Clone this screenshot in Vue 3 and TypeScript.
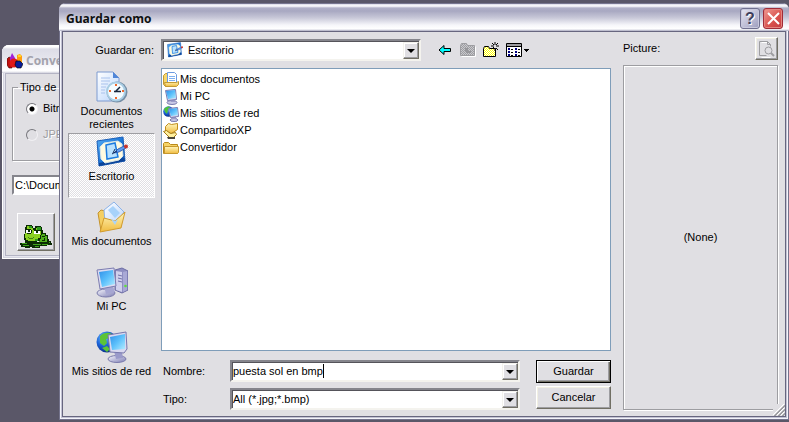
<script setup lang="ts">
import { ref } from 'vue'

interface Entry { icon: string; label: string }

const places: Entry[] = [
  { icon: 'recent', label: 'Documentos recientes' },
  { icon: 'desk', label: 'Escritorio' },
  { icon: 'mydocs', label: 'Mis documentos' },
  { icon: 'pc', label: 'Mi PC' },
  { icon: 'net', label: 'Mis sitios de red' },
]
const files: Entry[] = [
  { icon: 'docs16', label: 'Mis documentos' },
  { icon: 'pc16', label: 'Mi PC' },
  { icon: 'net16', label: 'Mis sitios de red' },
  { icon: 'shared16', label: 'CompartidoXP' },
  { icon: 'folder16', label: 'Convertidor' },
]
const tools = [
  { icon: 'back', label: 'Atrás', wide: false },
  { icon: 'up', label: 'Subir un nivel', wide: false },
  { icon: 'newfolder', label: 'Crear nueva carpeta', wide: false },
  { icon: 'views', label: 'Ver', wide: true },
]
const place = ref('Escritorio')
const folder = ref('Escritorio')
const fileName = ref('puesta sol en bmp')
const fileType = ref('All (*.jpg;*.bmp)')
const format = ref('bmp')
const path = ref('C:\\Documents')
</script>

<template>
  <svg class="sprite" aria-hidden="true">
    <defs>
      <linearGradient id="gScreen" x1="0" y1="0" x2="1" y2="1">
        <stop offset="0" stop-color="#2f8fe8" /><stop offset=".5" stop-color="#5cc0fb" /><stop offset="1" stop-color="#b4ecff" />
      </linearGradient>
      <linearGradient id="gFolder" x1="0" y1="0" x2="0" y2="1">
        <stop offset="0" stop-color="#fff6bd" /><stop offset="1" stop-color="#f0bb3f" />
      </linearGradient>
      <linearGradient id="gMetal" x1="0" y1="0" x2="1" y2="1">
        <stop offset="0" stop-color="#f6f6fd" /><stop offset="1" stop-color="#7d7db4" />
      </linearGradient>
      <linearGradient id="gDesk" x1="0" y1="0" x2="1" y2="1">
        <stop offset="0" stop-color="#58aff5" /><stop offset=".5" stop-color="#1c76d8" /><stop offset="1" stop-color="#0a4ba6" />
      </linearGradient>
      <linearGradient id="gPaper" x1="0" y1="0" x2="1" y2="1">
        <stop offset="0" stop-color="#ffffff" /><stop offset="1" stop-color="#b9d4fb" />
      </linearGradient>
      <radialGradient id="gGlobe" cx=".35" cy=".3" r=".75">
        <stop offset="0" stop-color="#6fc4ff" /><stop offset=".5" stop-color="#1b62d8" /><stop offset="1" stop-color="#0a2b80" />
      </radialGradient>
      <pattern id="pDither" width="2" height="2" patternUnits="userSpaceOnUse">
        <rect width="2" height="2" fill="#ffff00" /><path d="M0 0h1v1H0zM1 1h1v1H1z" fill="#ffffff" />
      </pattern>
      <pattern id="pGrey" width="2" height="2" patternUnits="userSpaceOnUse">
        <rect width="2" height="2" fill="#c9c9cd" /><path d="M0 0h1v1H0zM1 1h1v1H1z" fill="#9d9da1" />
      </pattern>
    </defs>

    <symbol id="recent" viewBox="0 0 32 32">
      <path d="M1 1h16l6 6v23H1z" fill="url(#gPaper)" stroke="#7c9ad0" />
      <path d="M17 1l6 6h-6z" fill="#4f86d8" />
      <path d="M5 7h9M5 10h9M5 13h7M5 16h5M5 19h4M5 22h4" stroke="#a9c2ec" />
      <circle cx="21" cy="21" r="10.5" fill="#748da4" />
      <circle cx="20" cy="20.500" r="9" fill="#f4fbff" stroke="#a9cde4" stroke-width="2" />
      <path d="M20 13v2M20 26v2M13 20h2M26 20h2" stroke="#f0682c" stroke-width="2" />
      <path d="M19 21l5-5M18 20.500h7" fill="none" stroke="#17263c" stroke-width="1.500" />
    </symbol>
    <symbol id="desk" viewBox="0 0 32 32">
      <path d="M1 5L27 1l2 24-26 5z" fill="url(#gDesk)" stroke="#1c5fb8" />
      <path d="M3 30l26-5-.5-3L3 27z" fill="#0b4498" />
      <path d="M8 7l14-2 4 3 1 12-4 4-14 3-4-4-1-12z" fill="#fffbe0" stroke="#d8e6e8" />
      <path d="M10 9l9-2 3 14-11 2z" fill="#b9e2ff" stroke="#1b7be0" stroke-width="1.500" />
      <path d="M18 17l4-4 6-3 2 2-7 4z" fill="#5f9cf2" stroke="#1d4da8" stroke-width=".8" />
      <path d="M16 18l5-3M17 17l2-4" stroke="#0f2c60" />
      <circle cx="30" cy="10.500" r="2" fill="#c9342a" />
    </symbol>
    <symbol id="mydocs" viewBox="0 0 32 32">
      <path d="M2 12l3-3 4 1 2 3 14-2v14L5 30z" fill="#f5cf62" stroke="#c5922a" />
      <path d="M8 9L18 1l10 10-9 13-10-3z" fill="url(#gPaper)" stroke="#8bb2e8" />
      <path d="M12 9l5-4 7 7-5 5z" fill="#a7d2fa" />
      <path d="M4 31L8 17l11 3 10-9-4 16z" fill="url(#gFolder)" stroke="#d19b2d" />
      <path d="M15 18l4 2 3-2-3 6z" fill="#a9d4fa" />
    </symbol>
    <symbol id="pc" viewBox="0 0 32 32">
      <path d="M19 4l7-2 6 3v19l-6 3-7-3z" fill="#8e8ec2" stroke="#6d6da4" />
      <path d="M27 6l4-1v19l-4 2z" fill="#a9a9d6" /><path d="M20 5l6 1v20l-6-2z" fill="#d0d0ec" />
      <path d="M22 9l4 1M22 12l4 1M22 15l4 1" stroke="#6f6fa8" />
      <circle cx="29.500" cy="20" r="1.300" fill="#5ee03a" />
      <ellipse cx="10" cy="27" rx="9" ry="4" fill="url(#gMetal)" stroke="#7a7aab" />
      <path d="M8 20h9l2 6-9 2z" fill="#a6a6d2" />
      <path d="M1 4l17-2 2 18-16 3z" fill="#dcdcf2" stroke="#7c7cb0" />
      <path d="M3 6l14-2 2 14-13 3z" fill="url(#gScreen)" />
    </symbol>
    <symbol id="net" viewBox="0 0 32 32">
      <circle cx="11" cy="11" r="10.5" fill="url(#gGlobe)" />
      <path d="M4 5c4-4 9-4 12-2l-2 4-4 1 1 4-3 3-4-3zM6 17l5-2 3 3-3 3z" fill="#5cc437" />
      <ellipse cx="21" cy="28" rx="9" ry="3.500" fill="url(#gMetal)" stroke="#7a7aab" />
      <path d="M18 20l8 1 1 6-7 1z" fill="#9a9aca" />
      <path d="M12 4l18-3 1 17-3 4-14-1z" fill="#d8d8f0" stroke="#7777ab" />
      <path d="M14 6l15-3v15l-13 1z" fill="url(#gScreen)" />
    </symbol>
    <symbol id="docs16" viewBox="0 0 16 16">
      <path d="M.5 3.500l2-2h3l1 1v12h-4l-2-2z" fill="#f7d76b" stroke="#c39a32" />
      <path d="M4.500.5h7l2 2v9h-9z" fill="#fff" stroke="#6c9be0" />
      <path d="M6 4.500h6M6 6.500h6M6 8.500h6" stroke="#7fb0f0" />
      <path d="M2.500 14.500l-1-4h12l2-1v3l-2 2z" fill="url(#gFolder)" stroke="#c39a32" />
    </symbol>
    <symbol id="pc16" viewBox="0 0 16 16">
      <ellipse cx="9" cy="13.500" rx="5" ry="2" fill="#c9c9e6" stroke="#7b7bad" />
      <path d="M8 10h4v3H8z" fill="#9d9dca" />
      <path d="M2.500 1.500l10-1 1 10-9 1z" fill="#dadaf0" stroke="#7a7ab0" />
      <path d="M3 2l9-1 1 8-8 1z" fill="url(#gScreen)" />
    </symbol>
    <symbol id="net16" viewBox="0 0 16 16">
      <circle cx="5.500" cy="5.500" r="5.300" fill="url(#gGlobe)" />
      <path d="M1 3c2-2 4-3 6-2L5 4 4 8 2 6z" fill="#4fc23a" />
      <ellipse cx="11" cy="14" rx="4" ry="1.500" fill="#c9c9e6" stroke="#7b7bad" />
      <path d="M9 10h4v3H9z" fill="#9d9dca" />
      <path d="M5.500 2.500l9-1 1 9-8 1z" fill="#dadaf0" stroke="#7a7ab0" />
      <path d="M6 3l8-1 1 7-7 1z" fill="url(#gScreen)" />
    </symbol>
    <symbol id="shared16" viewBox="0 0 16 16">
      <path d="M2.500 3.500l3-3 3 1 6-1v6l-6 4-6-2z" fill="url(#gFolder)" stroke="#c08d1c" />
      <path d="M.5 8.500l3-1 4 3 5-1 1 2-3 3h-4z" fill="#fff0a0" stroke="#a37a14" />
      <path d="M4 14h8v2H5z" fill="#49453a" />
    </symbol>
    <symbol id="folder16" viewBox="0 0 16 16">
      <path d="M.5 13.500v-10l1-1h4l2 2h7v9z" fill="#f6d366" stroke="#b98a1c" />
      <path d="M1.500 13.500v-7h14v6l-1 1z" fill="url(#gFolder)" stroke="#c6982f" />
    </symbol>
    <symbol id="back" viewBox="0 0 16 16">
      <path d="M2 8L7 3.500V6.500H13.500V9.500H7V12.500z" fill="#00ffff" stroke="#000" />
    </symbol>
    <symbol id="up" viewBox="0 0 16 16">
      <path d="M1.500 14.500h14v-10" fill="none" stroke="#fff" />
      <path d="M.5 13.500v-10l1-2h5l1 2h7v10z" fill="url(#pGrey)" stroke="#9d9da1" />
      <path d="M5 6h3v3H5zM6 9h5v2H6z" fill="#96969a" />
    </symbol>
    <symbol id="newfolder" viewBox="0 0 16 16">
      <path d="M.5 14.500v-8l1-2h4l1 2h6v8z" fill="url(#pDither)" stroke="#000" />
      <path d="M12 0v3M12 6v3M8 4h3M13 4h3M9 1l2 2M15 1l-2 2M13 6l2 2M9 7l2-2" stroke="#000" fill="none" />
    </symbol>
    <symbol id="views" viewBox="0 0 24 16">
      <path d="M.5 1.500h15v13H.5z" fill="#fff" stroke="#000" /><path d="M1 2h14v2H1z" fill="#9d9da1" /><path d="M0 4h16v1H0z" />
      <path d="M2 6h2v2H2zM2 9h2v2H2zM2 12h2v2H2zM9 6h2v2H9zM9 9h2v2H9zM9 12h2v2H9z" fill="#000080" />
      <path d="M5 7.500h2M5 10.500h2M5 13.500h2M12 7.500h2M12 10.500h2M12 13.500h2" stroke="#000" />
      <path d="M18 7h5v1h-1v1h-1v1h-1V9h-1V8h-1z" />
    </symbol>
    <symbol id="shapes" viewBox="0 0 16 16">
      <path d="M0 6l2-2 2 1 1 3v7H2L0 12z" fill="#c01010" stroke="#400000" stroke-width=".6" />
      <path d="M5 0l3 5v4H3V5z" fill="#a020d8" />
      <path d="M10 2l3-1 2 2v10h-5z" fill="#ff9c10" /><path d="M11 2h3v2h-3z" fill="#ffd820" />
      <circle cx="7" cy="10" r="4.500" fill="#e01818" />
      <path d="M9 8h4l3 3-2 4h-4l-2-3z" fill="#081c98" stroke="#000" stroke-width=".6" />
    </symbol>
    <symbol id="frog" viewBox="0 0 32 24" shape-rendering="crispEdges">
      <path d="M0 19h5v-1h22v-1h4v2h1v2h-5v1h-7v2h-8v-1h-2v1H5v-1H1v-2H0z" fill="#0a2a04" />
      <path d="M2 19h5v1H2zM3 21h6v1H3zM13 20h8v1h-8zM15 22h4v1h-4zM24 18h6v1h-6zM22 20h6v1h-6z" fill="#3fa51c" />
      <path d="M20 6h3v3h3v2h2v4h1v4h-9z" fill="#0a2a04" />
      <path d="M19 8h3v2h3v2h2v6h-8z" fill="#4fae1b" /><path d="M22 12h3v1h-3zM24 14h1v3h-3v-1h2z" fill="#0a2a04" />
      <path d="M5 3h1V1h6v1h1v2h2V2h6v1h1v8h-1v4h-1v2h-3v2H7v-1H5v-2H4v-6h1z" fill="#0a2a04" />
      <path d="M7 2h4v2h2v2h3V4h1V3h3v4h1v4h-1v3h-2v2h-3v1H8v-1H6v-2H5v-5h2z" fill="#8bd022" />
      <path d="M9 2h3v2H9zM17 3h4v3h-4zM15 15h3v2h-3z" fill="#2c9a1c" />
      <path d="M6 5h5v4H6zM14 6h6v4h-6z" fill="#fff" /><path d="M6 5h5v1H6zM14 6h6v1h-6zM8 6h2v2H8zM16 7h2v2h-2zM11 6h1v3h-1zM7 9h4v1H7z" fill="#0a2a04" />
      <path d="M8 13h1v1H8zM9 14h4v1H9zM13 13h1v1h-1z" fill="#3f8214" />
    </symbol>
    <symbol id="preview" viewBox="0 0 18 18">
      <path d="M12.500 17.500h-9M3.500 2.500h7" stroke="#fff" />
      <path d="M1.500 15.500v-14h8l3 3v2M9.500 1.500v3h3M1.500 15.500h7" fill="none" stroke="#9d9da1" />
      <circle cx="10.500" cy="10.500" r="3.500" fill="none" stroke="#9d9da1" />
      <path d="M13 13l3 3" stroke="#9d9da1" stroke-width="2" />
    </symbol>
  </svg>

  <div class="desktop">
    <section class="window behind">
      <header class="bar"><svg class="i16"><use href="#shapes" /></svg><h2>Convertidor</h2></header>
      <form class="client" @submit.prevent>
        <fieldset>
          <legend>Tipo de imagen</legend>
          <label><input v-model="format" type="radio" value="bmp" />Bitmap</label>
          <label class="off"><input v-model="format" type="radio" value="jpg" disabled />JPEG</label>
        </fieldset>
        <input v-model="path" class="field" aria-label="Ruta" />
        <button class="frog" aria-label="Convertir"><svg><use href="#frog" /></svg></button>
      </form>
    </section>

    <section class="window dialog">
      <header class="bar">
        <h1>Guardar como</h1>
        <button class="cap" aria-label="Ayuda">?</button>
        <button class="cap close" aria-label="Cerrar"><svg viewBox="0 0 13 13"><path d="M1 1l11 11M12 1L1 12" /></svg></button>
      </header>
      <form class="client body" @submit.prevent>
        <div class="main">
          <div class="top">
            <label for="folder">Guardar en:</label>
            <div class="combo look">
              <svg class="i16"><use href="#desk" /></svg>
              <select id="folder" v-model="folder"><option>Escritorio</option></select>
              <span class="drop"></span>
            </div>
            <div class="tools">
              <button v-for="t in tools" :key="t.icon" type="button" :class="{ wide: t.wide }" :aria-label="t.label"><svg><use :href="'#' + t.icon" /></svg></button>
            </div>
          </div>
          <div class="middle">
            <nav class="places">
              <button v-for="p in places" :key="p.label" type="button" :class="{ on: p.label === place }" @click="place = p.label">
                <svg><use :href="'#' + p.icon" /></svg>{{ p.label }}
              </button>
            </nav>
            <div class="right">
              <ul class="files">
                <li v-for="f in files" :key="f.label"><svg class="i16"><use :href="'#' + f.icon" /></svg>{{ f.label }}</li>
              </ul>
              <div class="foot">
                <div class="rows">
                  <div class="row">
                    <label for="name">Nombre:</label>
                    <div class="combo"><input id="name" v-model="fileName" /><i class="caret"></i><span class="drop"></span></div>
                  </div>
                  <div class="row">
                    <label for="type">Tipo:</label>
                    <div class="combo"><select id="type" v-model="fileType"><option>All (*.jpg;*.bmp)</option></select><span class="drop"></span></div>
                  </div>
                </div>
                <div class="actions">
                  <button class="push default">Guardar</button>
                  <button class="push" type="button">Cancelar</button>
                </div>
              </div>
            </div>
          </div>
        </div>
        <aside>
          <div class="phead"><span>Picture:</span><button class="push zoom" type="button" aria-label="Vista previa" disabled><svg><use href="#preview" /></svg></button></div>
          <div class="picture">(None)</div>
        </aside>
      </form>
      <svg class="grip" viewBox="0 0 12 12"><path class="hi" d="M0 11L11 0M4 11L11 4M8 11L11 8" /><path d="M1 12L12 1M2 12L12 2M5 12L12 5M6 12L12 6M9 12L12 9M10 12L12 10" /></svg>
    </section>
  </div>
</template>

<style>
body { margin: 0; }
</style>

<style scoped>
* { box-sizing: border-box; }
.sprite { position: absolute; width: 0; height: 0; }
.desktop {
  position: relative; height: 100vh; overflow: hidden; background: #5a5768;
  font: 11px/13px "Liberation Sans", Arial, sans-serif; color: #000; white-space: nowrap;
}
button, input, select { font: inherit; color: inherit; margin: 0; padding: 0; border: 0; border-radius: 0; outline: 0; background: none; }
svg { display: block; flex: none; }
.i16 { width: 16px; height: 16px; }
h1, h2 { margin: 0; font: bold 12px/18px "Open Sans", "Noto Sans", sans-serif; color: #0e1010; }

.window {
  position: absolute; display: flex; flex-direction: column; padding: 0 3px 3px;
  border-radius: 7px 7px 0 0; background: #c2c2d3;
  box-shadow: inset 0 0 0 1px #74738c, inset 0 0 0 2px #f4f4fa;
}
.bar {
  display: flex; align-items: center; gap: 3px; height: 28px; flex: none; margin: 0 -3px; padding: 3px 6px 0 7px;
  border-radius: 7px 7px 0 0;
  background: linear-gradient(#77768f 0 1px, #d9d9e6 1px, #fff 3px, #b1b1c8 5px, #a8a8c1 8px, #c9c9d9 15px, #f6f6fa 22px, #fff 26px, #a9a9bf 28px);
}
.client { flex: 1; min-height: 0; border: 1px solid #67667f; background: #e0dfe3; }

.behind { left: 2px; top: 45px; width: 300px; height: 214px; background: #e6e6ee; box-shadow: inset 0 0 0 1px #fff, inset 0 0 0 2px #d4d4e0; }
.behind .bar { padding-left: 5px; background: linear-gradient(#fff 0 2px, #dddde7 4px, #e4e4ec 12px, #fbfbfd 22px, #fff 26px, #d0d0dc 28px); }
.behind h2 { color: #a3a2ac; }
.behind .client { border-color: #b4b4c4; padding: 7px 6px; }
fieldset {
  display: flex; flex-direction: column; gap: 13px; height: 80px; margin: 0 0 14px; padding: 8px 13px 0;
  border: 1px solid #9d9da1; box-shadow: inset 1px 1px #fff, 1px 1px #fff;
}
legend { padding: 0 2px; margin-left: -8px; }
fieldset label { display: flex; align-items: center; gap: 5px; }
.off { color: #9d9da1; text-shadow: 1px 1px #fff; }
input[type="radio"] {
  appearance: none; width: 12px; height: 12px; border-radius: 50%; background: #fff;
  border: 1px solid; border-color: #77777d #f1f0f3 #f1f0f3 #77777d;
}
input[type="radio"]:checked { background: radial-gradient(#000 0 2px, #fff 3px); }
input[type="radio"]:disabled { background: #e0dfe3; }
.field { display: block; width: 200px; height: 20px; padding: 0 1px; background: #fff; border: 2px solid; border-color: #85858c #fff #fff #85858c; }
.frog { display: grid; place-items: center; width: 38px; height: 38px; margin: 18px 0 0 5px; border: 1px solid; border-color: #fff #716f64 #716f64 #fff; box-shadow: inset -1px -1px #9d9da1; }
.frog svg { width: 32px; height: 24px; margin-top: 8px; }

.dialog { left: 59px; top: 3px; right: 0; bottom: 2px; }
.dialog h1 { flex: 1; }
.cap {
  display: grid; place-items: center; width: 20px; height: 21px; border: 1px solid #70708f; border-radius: 3px;
  background: linear-gradient(135deg, #e6e6f2, #b4b4ce 70%, #9c9cbc); box-shadow: inset 0 0 0 1px #c9c9dd;
  font: bold 16px/16px "Liberation Sans", Arial, sans-serif; color: #3f3f5c; text-shadow: 1px 1px #fff;
}
.close { background: linear-gradient(135deg, #f09a92, #d8504c 60%, #c23c40); border-color: #a02c38; box-shadow: inset 0 0 0 1px #e48580; }
.close svg { width: 13px; height: 13px; }
.close path { stroke: #fff; stroke-width: 2; }

.body { display: flex; gap: 12px; padding: 5px 7px 6px 5px; }
.main { flex: 1; min-width: 0; display: flex; flex-direction: column; gap: 7px; }
.top { display: flex; align-items: flex-end; height: 24px; }
.top label { width: 93px; padding: 0 7px 4px 0; text-align: right; }
.combo { position: relative; flex: 1; display: flex; height: 22px; padding: 0 0 0 1px; background: #fff; border: 2px solid; border-color: #85858c #f4f3ee #f4f3ee #85858c; box-shadow: inset 1px 1px #55545a; }
.combo select, .combo input { flex: 1; min-width: 0; appearance: none; padding: 1px 0 0; }
.combo input { flex: none; field-sizing: content; }
.caret { width: 1px; height: 14px; margin-top: 2px; background: #000; }
.look { flex: 0 1 260px; padding-left: 4px; align-items: center; }
.look select { padding: 0 0 0 5px; height: 18px; }
.drop {
  position: absolute; right: 0; top: 1px; bottom: 0; width: 16px; pointer-events: none;
  background: #e0dfe3; border: 1px solid; border-color: #f4f3ee #716f64 #716f64 #f4f3ee; box-shadow: inset -1px -1px #9d9da1, inset 1px 1px #fff;
}
.drop::after { content: ""; position: absolute; left: 3px; top: 6px; border: 4px solid transparent; border-top-color: #000; border-bottom: 0; }
.tools { display: flex; gap: 7px; margin: 0 0 3px 16px; }
.tools svg { width: 16px; height: 16px; }
.tools .wide svg { width: 24px; }
.middle { flex: 1; min-height: 0; display: flex; gap: 6px; }
.places { width: 87px; }
.places button {
  display: flex; flex-direction: column; align-items: center; gap: 2px; width: 100%; height: 65px; padding: 2px 6px 0;
  border: 1px solid transparent; white-space: normal;
}
.places button:not(:first-child) { padding: 2px 0 0; }
.places svg { width: 32px; height: 32px; }
.places .on {
  border-color: #9d9da1 #fff #fff #9d9da1;
  background: repeating-conic-gradient(#fff 0 25%, #e0dfe3 0 50%) 0 0 / 2px 2px;
}
.right { flex: 1; min-width: 0; display: flex; flex-direction: column; gap: 9px; }
.files { flex: 1; margin: 0; padding: 2px 1px; list-style: none; background: #fff; border: 1px solid #7f9db9; }
.files li { display: flex; align-items: center; gap: 1px; height: 17px; }
.foot { display: flex; gap: 16px; }
.rows { flex: 1; display: flex; flex-direction: column; gap: 6px; }
.row { display: flex; align-items: center; }
.row label { width: 69px; padding-left: 2px; }
.actions { display: flex; flex-direction: column; gap: 3px; width: 75px; }
.push { height: 23px; border: 1px solid; border-color: #fff #716f64 #716f64 #fff; box-shadow: inset -1px -1px #9d9da1, inset 1px 1px #f1efe2; }
.default { border-color: #000; box-shadow: inset 1px 1px #fff, inset -1px -1px #716f64, inset -2px -2px #9d9da1; }
aside { width: 155px; display: flex; flex-direction: column; gap: 5px; }
.phead { display: flex; justify-content: space-between; align-items: center; }
.zoom { width: 23px; display: grid; place-items: center; }
.zoom svg { width: 18px; height: 18px; }
.picture { flex: 1; display: grid; place-items: center; border: 1px solid #9d9da1; box-shadow: inset 1px 1px #fff, 1px 1px #fff; }
.grip { position: absolute; right: 4px; bottom: 4px; width: 12px; height: 12px; background: #e0dfe3; stroke: #9d9da1; }
.grip .hi { stroke: #fff; }
</style>
